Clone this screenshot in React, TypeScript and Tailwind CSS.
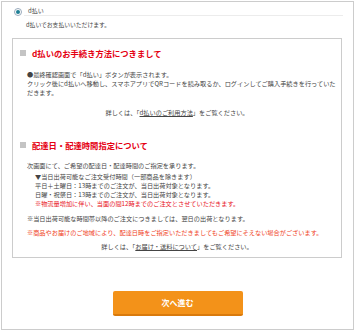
const font = { fontFamily: '"Noto Sans CJK JP", "Noto Sans", sans-serif' }

const Heading = ({ children }: { children: React.ReactNode }) => (
  <div className="flex items-center h-[10px] pl-[7px]">
    <span className="w-[6px] h-[6px] bg-[#c4c4c4] mr-[6px]" />
    <span className="text-[8.3px] leading-[10px] font-bold text-[#e50012] whitespace-nowrap">
      {children}
    </span>
  </div>
)

const App = () => {
  return (
    <div
      style={font}
      className="ml-px mt-px w-[353px] h-[329px] border border-[#cccccc] bg-white text-[#444]"
    >
      <div className="mt-[5px] ml-[12px] mr-[10px] flex items-center">
        <span className="w-[8px] h-[8px] rounded-full border border-[#9ab] bg-white flex items-center justify-center">
          <span className="w-[4px] h-[4px] rounded-full bg-[#1f7f95]" />
        </span>
        <div className="flex-1 ml-[2px] pl-[4px] h-[9px] border-b border-[#ececec] text-[6px] leading-[8px]">
          d払い
        </div>
      </div>
      <p className="mt-[4px] pl-[24px] text-[5.8px] leading-[9px] whitespace-nowrap">
        d払いでお支払いいただけます。
      </p>

      <div className="mt-[9px] ml-[10px] w-[330px] border border-[#cccccc] pt-[9px] pb-[6px]">
        <Heading>d払いのお手続き方法につきまして</Heading>
        <div className="mt-[12px] pl-[14px] text-[6.2px] leading-[9px] whitespace-nowrap">
          <p>●最終確認画面で「d払い」ボタンが表示されます。</p>
          <p>
            クリック後にd払いへ移動し、スマホアプリでQRコードを読み取るか、ログインしてご購入手続きを行っていた
          </p>
          <p>だきます。</p>
        </div>
        <p className="mt-[11px] text-center text-[6.2px] leading-[9px] whitespace-nowrap">
          詳しくは、「<span className="underline">d払いのご利用方法</span>」をご覧ください。
        </p>

        <div className="mt-[23px]">
          <Heading>配達日・配達時間指定について</Heading>
        </div>
        <div className="mt-[11px] pl-[14px] text-[6.2px] leading-[9px] whitespace-nowrap">
          <p>次画面にて、ご希望の配達日・配達時間のご指定を承ります。</p>
          <div className="mt-[2px] pl-[8px]">
            <p>▼当日出荷可能なご注文受付時間（一部商品を除きます）</p>
            <p>平日＋土曜日：13時までのご注文が、当日出荷対象となります。</p>
            <p>日曜・祝祭日：13時までのご注文が、当日出荷対象となります。</p>
            <p className="text-[#e8101a]">
              ※物流量増加に伴い、当面の間12時までのご注文とさせていただきます。
            </p>
          </div>
          <p className="mt-[6px]">
            ※当日出荷可能な時間帯以降のご注文につきましては、翌日の出荷となります。
          </p>
          <p className="mt-[5px] text-[#f0401c]">
            ※商品やお届けのご地域により、配達日時をご指定いただきましてもご希望にそえない場合がございます。
          </p>
        </div>
        <p className="mt-[5px] text-center text-[6.2px] leading-[9px] whitespace-nowrap">
          詳しくは、「<span className="underline">お届け・送料について</span>」をご覧ください。
        </p>
      </div>

      <div className="mt-[33px] flex justify-center">
        <button className="w-[130px] h-[25px] rounded-[2px] bg-[#f39219] border-b-2 border-[#d97a0c] text-white text-[8px] font-bold">
          次へ進む
        </button>
      </div>
    </div>
  )
}

export default App
